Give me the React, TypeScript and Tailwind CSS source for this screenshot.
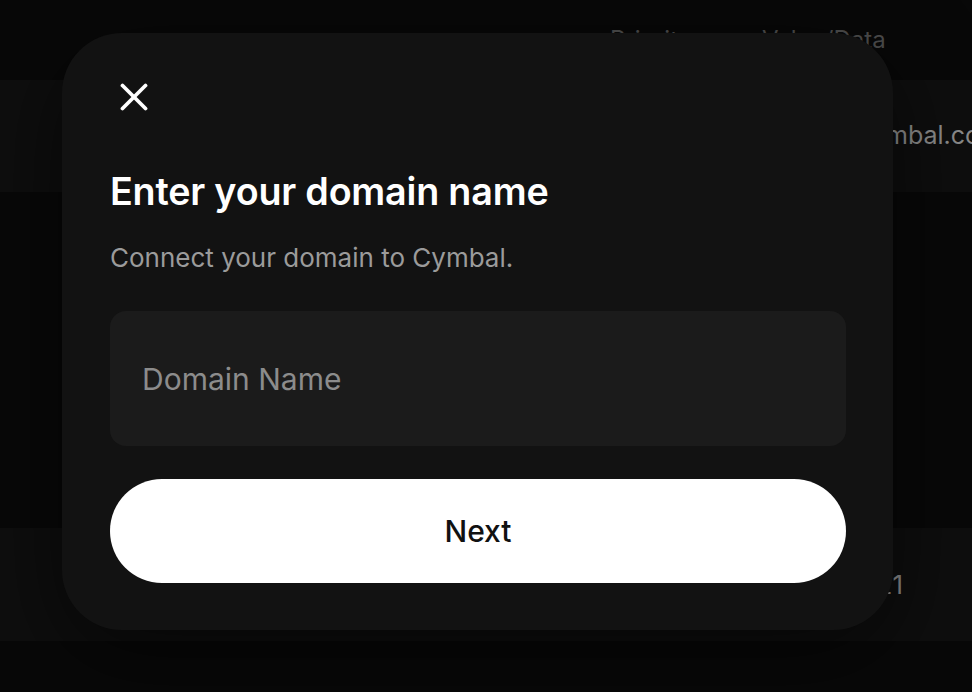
import React from 'react';

const font = { fontFamily: 'Inter, "Noto Sans", sans-serif' };

const BackgroundTable: React.FC = () => {
  return (
    <div className="w-full h-[692px] bg-[#080808] overflow-hidden">
      <div className="flex items-center h-[80px] text-[24px] text-[#4e4e4e] whitespace-nowrap">
        <div className="w-[610px] shrink-0" />
        <div className="w-[152px] shrink-0">Priority</div>
        <div className="shrink-0">Value/Data</div>
      </div>
      <div className="flex items-center h-[112px] bg-[#0e0e0e] text-[25px] text-[#8a8a8a] whitespace-nowrap">
        <div className="w-[610px] shrink-0" />
        <div className="w-[152px] shrink-0">—</div>
        <div className="shrink-0 pl-[24px]">mail@cymbal.com</div>
      </div>
      <div className="h-[336px]" />
      <div className="flex items-center h-[113px] bg-[#0e0e0e] text-[26px] text-[#8a8a8a] whitespace-nowrap">
        <div className="w-[610px] shrink-0" />
        <div className="w-[152px] shrink-0">10</div>
        <div className="w-[141px] shrink-0 text-right">3600 · 21</div>
      </div>
    </div>
  );
};

const CloseIcon: React.FC = () => (
  <svg width="28" height="28" viewBox="0 0 28 28" fill="none" stroke="currentColor" strokeWidth="3.8" strokeLinecap="round">
    <path d="M2.5 2.5 L25.5 25.5" />
    <path d="M25.5 2.5 L2.5 25.5" />
  </svg>
);

const DomainDialog: React.FC = () => {
  return (
    <div className="absolute left-[62px] top-[33px] w-[831px] h-[597px] rounded-[60px] bg-[#121212] shadow-[0_24px_90px_rgba(0,0,0,0.55)] pl-[48px] pr-[47px] pt-[50px]">
      <button className="flex items-center justify-center w-[28px] h-[28px] ml-[10px] text-white">
        <CloseIcon />
      </button>
      <h2 className="mt-[57px] text-[37.7px] leading-[46px] font-semibold text-white tracking-[-0.2px]">
        Enter your domain name
      </h2>
      <p className="mt-[28px] text-[26px] leading-[32px] text-[#9b9b9b]">
        Connect your domain to Cymbal.
      </p>
      <input
        className="mt-[37px] w-full h-[135px] rounded-[16px] bg-[#1b1b1b] px-[32px] text-[30px] text-white placeholder:text-[#8c8c8c] outline-none"
        style={font}
        placeholder="Domain Name"
      />
      <button className="mt-[33px] w-full h-[104px] rounded-full bg-white text-[30px] text-[#111111] font-medium">
        Next
      </button>
    </div>
  );
};

export default function App() {
  return (
    <div className="relative w-[972px] h-[692px] overflow-hidden" style={font}>
      <BackgroundTable />
      <DomainDialog />
    </div>
  );
}
